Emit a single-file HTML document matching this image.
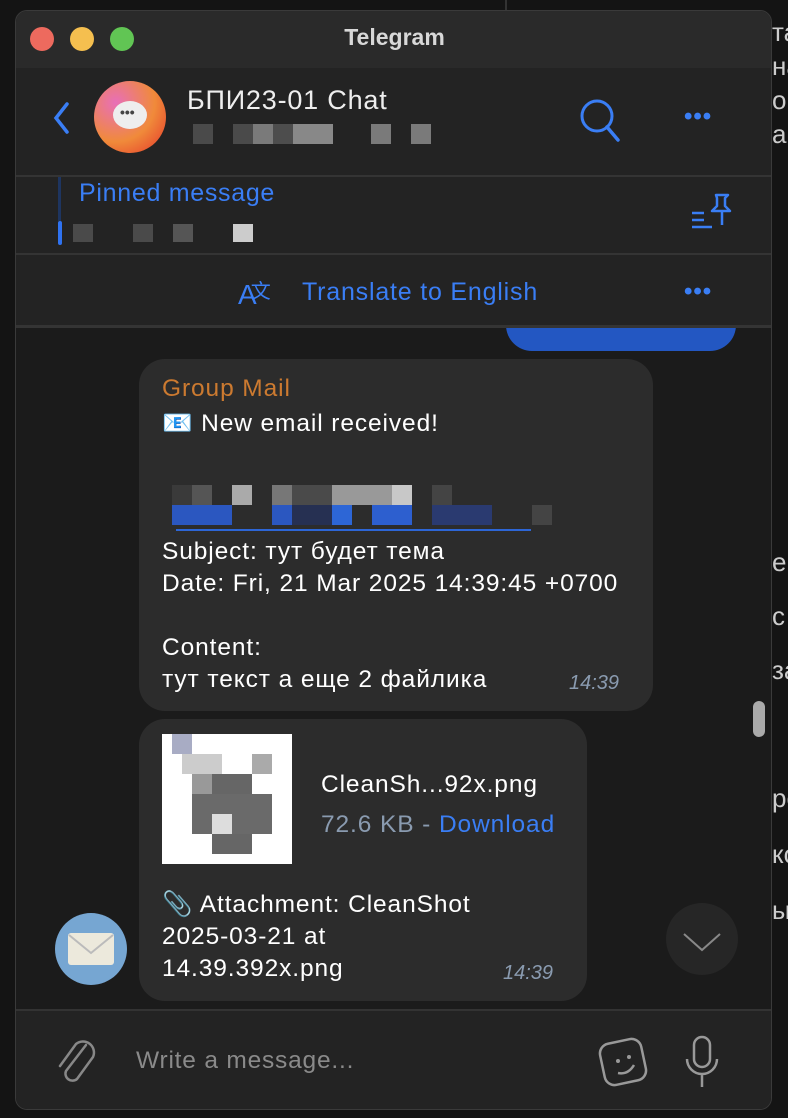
<!DOCTYPE html>
<html><head><meta charset="utf-8"><style>
*{margin:0;padding:0;box-sizing:border-box}
body{width:788px;height:1118px;background:#161616;position:relative;overflow:hidden;font-family:"Liberation Sans","Noto Sans CJK SC",sans-serif;color:#fff}
.a{position:absolute}
.win{position:absolute;left:15px;top:10px;width:757px;height:1100px;border-radius:12px;background:#1b1b1b;overflow:hidden;border:1px solid #3a3a3a}
.px{position:absolute}
.t{font-size:24.5px;line-height:32px;color:#fff;white-space:nowrap;letter-spacing:0.9px}
.bub{position:absolute;background:#2c2c2c;border-radius:26px}
</style></head><body>
<div class="a" style="left:0;top:0;width:788px;height:1118px;background:#141414"></div>
<div class="a" style="left:505px;top:0;width:2px;height:12px;background:#333"></div>
<div class="a" style="left:772px;top:15px;font-size:26px;color:#ccc;line-height:34px">та<br>на<br>о<br>а</div>
<div class="a" style="left:772px;top:535px;font-size:26px;color:#ccc;line-height:54px">е<br>с<br>за</div>
<div class="a" style="left:772px;top:770px;font-size:26px;color:#ccc;line-height:56px">ро<br>ко<br>ы</div>
<div class="win">
 <!-- title bar -->
 <div class="a" style="left:0;top:0;width:757px;height:57px;background:#2a2a2a"></div>
 <div class="a" style="left:14px;top:16px;width:24px;height:24px;border-radius:50%;background:#ed6a5e"></div>
 <div class="a" style="left:54px;top:16px;width:24px;height:24px;border-radius:50%;background:#f5bf4f"></div>
 <div class="a" style="left:94px;top:16px;width:24px;height:24px;border-radius:50%;background:#61c554"></div>
 <div class="a" style="left:0;top:13px;width:757px;text-align:center;font-size:23px;font-weight:bold;color:#d8d8d8">Telegram</div>
 <!-- chat blue bubble (behind header) -->
 <div class="a" style="left:490px;top:280px;width:230px;height:60px;background:#2357c2;border-radius:0 0 26px 26px"></div>
 <!-- header -->
 <div class="a" style="left:0;top:57px;width:757px;height:186px;background:#232323"></div>
 <div class="a" style="left:0;top:164px;width:757px;height:2px;background:#343434"></div>
 <div class="a" style="left:0;top:242px;width:757px;height:2px;background:#343434"></div>
 <svg class="a" style="left:36px;top:90px" width="20" height="34"><path d="M15 3 L4 17 L15 31" stroke="#3a7ef5" stroke-width="3.5" fill="none" stroke-linecap="round"/></svg>
 <div class="a" style="left:78px;top:70px;width:72px;height:72px;border-radius:50%;background:radial-gradient(circle at 30% 30%,#e86fb8,#f08a3a 55%,#e5342a)"></div>
 <div class="a" style="left:97px;top:90px;width:34px;height:28px;border-radius:50%;background:#eee"></div>
 <div class="a" style="left:104px;top:93px;font-size:14px;color:#444;font-weight:bold">•••</div>
 <div class="a" style="left:171px;top:74px;font-size:27px;color:#eee;letter-spacing:0.8px">БПИ23-01 Chat</div>
 <div class="px" style="left:177px;top:113px;width:20px;height:20px;background:#4a4a4a"></div>
 <div class="px" style="left:217px;top:113px;width:20px;height:20px;background:#4a4a4a"></div>
 <div class="px" style="left:237px;top:113px;width:20px;height:20px;background:#7a7a7a"></div>
 <div class="px" style="left:257px;top:113px;width:20px;height:20px;background:#4d4d4d"></div>
 <div class="px" style="left:277px;top:113px;width:40px;height:20px;background:#888"></div>
 <div class="px" style="left:355px;top:113px;width:20px;height:20px;background:#7a7a7a"></div>
 <div class="px" style="left:395px;top:113px;width:20px;height:20px;background:#7a7a7a"></div>
 <svg class="a" style="left:560px;top:85px" width="50" height="50"><circle cx="21" cy="20" r="15" stroke="#3a7ef5" stroke-width="3" fill="none"/><path d="M31 31 L42 44" stroke="#3a7ef5" stroke-width="3.5" stroke-linecap="round"/></svg>
 <div class="a" style="left:668px;top:92px;font-size:24px;color:#3a7ef5;font-weight:bold;letter-spacing:1px">•••</div>
 <!-- pinned -->
 <div class="a" style="left:42px;top:166px;width:3px;height:44px;background:#1e3560"></div>
 <div class="a" style="left:42px;top:210px;width:4px;height:24px;background:#2f72f0;border-radius:2px"></div>
 <div class="a" style="left:63px;top:168px;font-size:25px;color:#3a7ef5;letter-spacing:0.7px">Pinned message</div>
 <div class="px" style="left:57px;top:213px;width:20px;height:18px;background:#4a4a4a"></div>
 <div class="px" style="left:117px;top:213px;width:20px;height:18px;background:#4a4a4a"></div>
 <div class="px" style="left:157px;top:213px;width:20px;height:18px;background:#555"></div>
 <div class="px" style="left:217px;top:213px;width:20px;height:18px;background:#ccc"></div>
 <svg class="a" style="left:674px;top:180px" width="44" height="40"><path d="M2 22h12M2 29h12M2 36h20" stroke="#3a7ef5" stroke-width="2.5"/><path d="M26 4h12l-3 3v8l5 5H22l5-5V7z M32 20v14" stroke="#3a7ef5" stroke-width="2.5" fill="none" stroke-linejoin="round"/></svg>
 <!-- translate -->
 <div class="a" style="left:0;top:244px;width:757px;height:72px;background:#232323"></div>
 <div class="a" style="left:0;top:314px;width:757px;height:3px;background:#343434"></div>
 <div class="a" style="left:222px;top:264px;font-size:28px;color:#3a7ef5">A<span style="font-size:20px;font-family:'Noto Sans CJK SC';vertical-align:6px;margin-left:-6px">文</span></div>
 <div class="a" style="left:286px;top:267px;font-size:25px;color:#3a7ef5;letter-spacing:0.8px">Translate to English</div>
 <div class="a" style="left:668px;top:267px;font-size:24px;color:#3a7ef5;font-weight:bold;letter-spacing:1px">•••</div>
 <!-- chat -->
 <div class="bub" style="left:123px;top:348px;width:514px;height:352px"></div>
 <div class="a" style="left:146px;top:364px;font-size:24.5px;color:#cc7a30;letter-spacing:0.9px">Group Mail</div>
 <div class="a t" style="left:146px;top:397px">📧 New email received!</div>
 <div class="px" style="left:156px;top:474px;width:20px;height:20px;background:#3a3a3a"></div>
 <div class="px" style="left:176px;top:474px;width:20px;height:20px;background:#555"></div>
 <div class="px" style="left:216px;top:474px;width:20px;height:20px;background:#aaa"></div>
 <div class="px" style="left:256px;top:474px;width:20px;height:20px;background:#777"></div>
 <div class="px" style="left:276px;top:474px;width:40px;height:20px;background:#4a4a4a"></div>
 <div class="px" style="left:316px;top:474px;width:80px;height:20px;background:#999"></div>
 <div class="px" style="left:376px;top:474px;width:20px;height:20px;background:#c8c8c8"></div>
 <div class="px" style="left:416px;top:474px;width:20px;height:20px;background:#444"></div>
 <div class="px" style="left:156px;top:494px;width:60px;height:20px;background:#2b57c0"></div>
 <div class="px" style="left:256px;top:494px;width:20px;height:20px;background:#2b57c0"></div>
 <div class="px" style="left:276px;top:494px;width:40px;height:20px;background:#263052"></div>
 <div class="px" style="left:316px;top:494px;width:20px;height:20px;background:#2d66d6"></div>
 <div class="px" style="left:356px;top:494px;width:40px;height:20px;background:#2d5fcf"></div>
 <div class="px" style="left:416px;top:494px;width:60px;height:20px;background:#2a3a70"></div>
 <div class="px" style="left:516px;top:494px;width:20px;height:20px;background:#444"></div>
 <div class="px" style="left:160px;top:518px;width:355px;height:2px;background:#2d66d6"></div>
 <div class="a t" style="left:146px;top:525px">Subject: тут будет тема</div>
 <div class="a t" style="left:146px;top:557px">Date: Fri, 21 Mar 2025 14:39:45 +0700</div>
 <div class="a t" style="left:146px;top:621px">Content:</div>
 <div class="a t" style="left:146px;top:653px">тут текст а еще 2 файлика</div>
 <div class="a" style="left:553px;top:661px;font-size:20px;font-style:italic;color:#8a9bb0">14:39</div>
 <div class="bub" style="left:123px;top:708px;width:448px;height:282px"></div>
 <div class="px" style="left:146px;top:723px;width:130px;height:130px;background:#fff"></div>
 <div class="px" style="left:156px;top:723px;width:20px;height:20px;background:#a8acc4"></div>
 <div class="px" style="left:166px;top:743px;width:40px;height:20px;background:#ccc"></div>
 <div class="px" style="left:176px;top:763px;width:40px;height:20px;background:#999"></div>
 <div class="px" style="left:196px;top:763px;width:40px;height:80px;background:#666"></div>
 <div class="px" style="left:176px;top:783px;width:80px;height:40px;background:#6a6a6a"></div>
 <div class="px" style="left:196px;top:803px;width:20px;height:20px;background:#ddd"></div>
 <div class="px" style="left:236px;top:743px;width:20px;height:20px;background:#aaa"></div>
 <div class="a" style="left:305px;top:760px;font-size:24.5px;color:#fff;letter-spacing:0.9px">CleanSh...92x.png</div>
 <div class="a" style="left:305px;top:800px;font-size:24.5px;color:#8a9bb0;letter-spacing:0.9px">72.6 KB - <span style="color:#3a7ef5">Download</span></div>
 <div class="a t" style="left:146px;top:878px"><span style="color:#9aa">📎</span> Attachment: CleanShot</div>
 <div class="a t" style="left:146px;top:910px">2025-03-21 at</div>
 <div class="a t" style="left:146px;top:942px">14.39.392x.png</div>
 <div class="a" style="left:487px;top:951px;font-size:20px;font-style:italic;color:#8a9bb0">14:39</div>
 <div class="a" style="left:39px;top:902px;width:72px;height:72px;border-radius:50%;background:#76a6d2"></div>
 <div class="a" style="left:52px;top:922px;width:46px;height:32px;background:#ece9dc;border-radius:3px"></div>
 <svg class="a" style="left:52px;top:922px" width="46" height="32"><path d="M1 2 L23 20 L45 2" stroke="#bbb" stroke-width="2" fill="none"/></svg>
 <div class="a" style="left:650px;top:892px;width:72px;height:72px;border-radius:50%;background:#262626"></div>
 <svg class="a" style="left:664px;top:915px" width="44" height="30"><path d="M4 8 L22 24 L40 8" stroke="#888" stroke-width="2" fill="none"/></svg>
 <!-- input -->
 <div class="a" style="left:0;top:998px;width:757px;height:2px;background:#333"></div>
 <div class="a" style="left:0;top:1000px;width:757px;height:100px;background:#232323"></div>
 <svg class="a" style="left:34px;top:1022px" width="50" height="56"><path d="M36 12 L16 38 a7 7 0 0 0 11 8 L43 24 a11 11 0 0 0 -17 -13 L10 33" stroke="#888" stroke-width="2.5" fill="none" stroke-linecap="round"/></svg>
 <div class="a" style="left:120px;top:1036px;font-size:24.5px;color:#8a8a8a;letter-spacing:0.8px">Write a message...</div>
 <svg class="a" style="left:580px;top:1024px" width="56" height="56"><rect x="6" y="6" width="42" height="42" rx="10" transform="rotate(-12 27 27)" stroke="#999" stroke-width="2.5" fill="none"/><circle cx="22" cy="26" r="2" fill="#999"/><circle cx="33" cy="22" r="2" fill="#999"/><path d="M22 38 q10 2 16 -8" stroke="#999" stroke-width="2.5" fill="none"/></svg>
 <svg class="a" style="left:666px;top:1022px" width="40" height="60"><rect x="12" y="4" width="16" height="30" rx="8" stroke="#999" stroke-width="2.5" fill="none"/><path d="M5 26 a15 15 0 0 0 30 0 M20 41 v13" stroke="#999" stroke-width="2.5" fill="none"/></svg>
 <div class="a" style="left:737px;top:690px;width:12px;height:36px;border-radius:6px;background:#aaa"></div>
</div>
</body></html>
